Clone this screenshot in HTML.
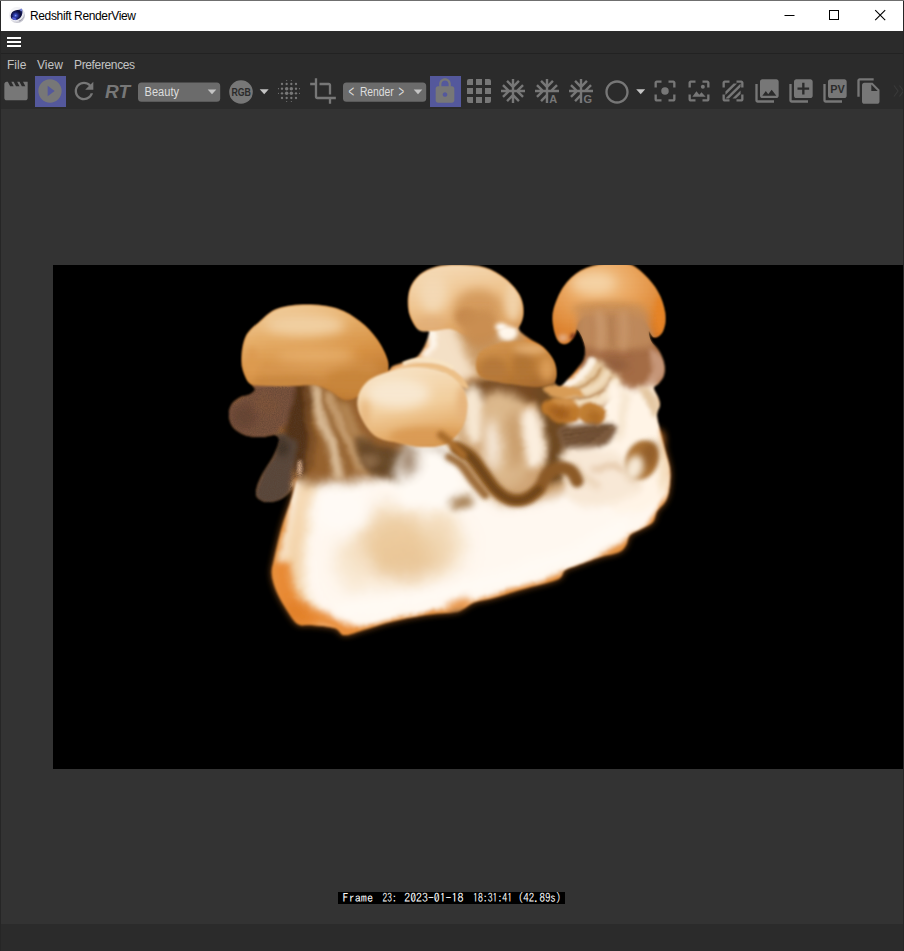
<!DOCTYPE html>
<html><head><meta charset="utf-8"><title>Redshift RenderView</title>
<style>
html,body{margin:0;padding:0;background:#333;}
body{width:904px;height:951px;position:relative;overflow:hidden;font-family:"Liberation Sans",sans-serif;}
#win{position:absolute;left:0;top:0;width:904px;height:951px;background:#2b2b2b;overflow:hidden;}
#titlebar{position:absolute;left:1px;top:1px;width:902px;height:30px;background:#fff;}
#title{position:absolute;left:30px;top:9px;font-size:12px;line-height:14px;color:#000;white-space:nowrap;letter-spacing:-0.36px;}
#topborder{position:absolute;left:0;top:0;width:904px;height:1px;background:#6f6f6f;}
#lborder{position:absolute;left:0;top:1px;width:1px;height:950px;background:#262626;}
#rborder{position:absolute;left:903px;top:1px;width:1px;height:950px;background:#262626;}
#sep1{position:absolute;left:1px;top:53px;width:902px;height:1px;background:#222;}
.menu{position:absolute;top:58px;font-size:12px;line-height:14px;color:#c4c4c4;white-space:nowrap;}
#view{position:absolute;left:1px;top:109px;width:902px;height:815px;background:#333;overflow:hidden;}
#img{position:absolute;left:52px;top:156px;width:850px;height:504px;background:#000;overflow:hidden;}
#status{position:absolute;left:337px;top:783px;width:227px;height:12px;background:#000;color:#fff;font-family:"IPAGothic","Liberation Mono",monospace;font-size:12px;line-height:12px;white-space:pre;box-sizing:border-box;}
.dd{position:absolute;top:82px;height:20px;background:#6a6a6a;border-radius:4px;color:#e4e4e4;font-size:12px;line-height:19px;white-space:nowrap;}
.hl{position:absolute;top:76px;width:31px;height:31px;background:#54589c;}
svg{position:absolute;left:0;top:0;}
</style></head>
<body>
<div id="win">
<div id="titlebar"></div>
<div id="topborder"></div>
<div id="title">Redshift RenderView</div>
<div id="sep1"></div>
<div class="menu" style="left:7px">File</div>
<div class="menu" style="left:37px">View</div>
<div class="menu" style="left:74px;letter-spacing:-0.36px">Preferences</div>
<div class="hl" style="left:35px"></div>
<div class="hl" style="left:430px"></div>
<div id="view">
<div id="img">
<svg width="850" height="504" viewBox="0 0 850 504" style="position:absolute;left:0;top:0">
<defs>
<filter id="b05" filterUnits="userSpaceOnUse" x="150" y="-30" width="500" height="430"><feGaussianBlur stdDeviation="0.7"/></filter>
<filter id="b1" filterUnits="userSpaceOnUse" x="150" y="-30" width="500" height="430"><feGaussianBlur stdDeviation="1.2"/></filter>
<filter id="b2" filterUnits="userSpaceOnUse" x="150" y="-30" width="500" height="430"><feGaussianBlur stdDeviation="2.2"/></filter>
<filter id="b3" filterUnits="userSpaceOnUse" x="150" y="-30" width="500" height="430"><feGaussianBlur stdDeviation="3.5"/></filter>
<filter id="b5" filterUnits="userSpaceOnUse" x="150" y="-30" width="500" height="430"><feGaussianBlur stdDeviation="5.5"/></filter>
<filter id="b9" filterUnits="userSpaceOnUse" x="150" y="-30" width="500" height="430"><feGaussianBlur stdDeviation="9"/></filter>
<filter id="b14" filterUnits="userSpaceOnUse" x="150" y="-30" width="500" height="430"><feGaussianBlur stdDeviation="14"/></filter>
<linearGradient id="cap1" x1="0.25" y1="0" x2="0.6" y2="1"><stop offset="0" stop-color="#f5d4a4"/><stop offset="0.28" stop-color="#e9b068"/><stop offset="0.6" stop-color="#d88f3c"/><stop offset="1" stop-color="#b06822"/></linearGradient>
<linearGradient id="cap2" x1="0.3" y1="0" x2="0.6" y2="1"><stop offset="0" stop-color="#f9e0bc"/><stop offset="0.45" stop-color="#f2c68e"/><stop offset="0.8" stop-color="#e0a460"/><stop offset="1" stop-color="#c8884a"/></linearGradient>
<radialGradient id="cap3" cx="0.42" cy="0.25" r="0.75"><stop offset="0" stop-color="#f6c88e"/><stop offset="0.4" stop-color="#eca458"/><stop offset="0.75" stop-color="#e0842c"/><stop offset="1" stop-color="#d86c12"/></radialGradient>
<linearGradient id="cap4" x1="0.3" y1="0" x2="0.55" y2="1"><stop offset="0" stop-color="#fbe8ca"/><stop offset="0.5" stop-color="#f5d09c"/><stop offset="0.82" stop-color="#e4a860"/><stop offset="1" stop-color="#c8843c"/></linearGradient>
<linearGradient id="cap5" x1="0.2" y1="0" x2="0.6" y2="1"><stop offset="0" stop-color="#dc9e58"/><stop offset="0.5" stop-color="#c27e32"/><stop offset="1" stop-color="#9a5c20"/></linearGradient>
<clipPath id="sil"><path d="M193,112 C191.3,108.0 189.0,102.7 189,96 C189.0,89.3 189.8,78.7 193,72 C196.2,65.3 202.7,60.7 208,56 C213.3,51.3 217.3,46.7 225,44 C232.7,41.3 244.2,40.0 254,40 C263.8,40.0 275.2,41.2 284,44 C292.8,46.8 300.3,51.8 307,57 C313.7,62.2 319.5,68.7 324,75 C328.5,81.3 332.2,89.8 334,95 C335.8,100.2 334.0,105.0 335,106 C336.0,107.0 337.2,102.5 340,101 C342.8,99.5 348.0,98.5 352,97 C356.0,95.5 360.7,94.8 364,92 C367.3,89.2 370.0,84.3 372,80 C374.0,75.7 376.7,68.7 376,66 C375.3,63.3 370.3,65.0 368,64 C365.7,63.0 364.0,63.2 362,60 C360.0,56.8 356.8,50.8 356,45 C355.2,39.2 355.2,30.8 357,25 C358.8,19.2 362.5,13.8 367,10 C371.5,6.2 377.3,3.7 384,2 C390.7,0.3 399.0,-0.2 407,0 C415.0,0.2 424.5,0.7 432,3 C439.5,5.3 446.3,9.5 452,14 C457.7,18.5 463.0,24.8 466,30 C469.0,35.2 469.7,40.5 470,45 C470.3,49.5 468.7,53.7 468,57 C467.3,60.3 464.5,62.2 466,65 C467.5,67.8 473.0,71.2 477,74 C481.0,76.8 486.2,78.5 490,82 C493.8,85.5 497.8,90.7 500,95 C502.2,99.3 502.7,104.2 503,108 C503.3,111.8 501.2,115.8 502,118 C502.8,120.2 505.7,121.8 508,121 C510.3,120.2 513.3,115.8 516,113 C518.7,110.2 521.5,107.2 524,104 C526.5,100.8 529.7,97.7 531,94 C532.3,90.3 532.5,86.0 532,82 C531.5,78.0 529.5,73.0 528,70 C526.5,67.0 524.3,63.7 523,64 C521.7,64.3 521.5,69.7 520,72 C518.5,74.3 516.3,77.3 514,78 C511.7,78.7 508.2,78.7 506,76 C503.8,73.3 501.8,67.2 501,62 C500.2,56.8 499.3,51.7 501,45 C502.7,38.3 506.5,28.5 511,22 C515.5,15.5 521.2,9.8 528,6 C534.8,2.2 543.8,0.0 552,-1 C560.2,-2.0 569.8,-2.5 577,0 C584.2,2.5 590.0,8.7 595,14 C600.0,19.3 604.2,25.7 607,32 C609.8,38.3 611.7,46.2 612,52 C612.3,57.8 610.8,63.7 609,67 C607.2,70.3 603.2,72.2 601,72 C598.8,71.8 596.5,65.3 596,66 C595.5,66.7 596.3,72.7 598,76 C599.7,79.3 603.8,82.3 606,86 C608.2,89.7 610.2,94.0 611,98 C611.8,102.0 611.8,106.7 611,110 C610.2,113.3 607.7,115.8 606,118 C604.3,120.2 601.2,120.7 601,123 C600.8,125.3 604.0,129.2 605,132 C606.0,134.8 607.2,137.0 607,140 C606.8,143.0 604.0,145.8 604,150 C604.0,154.2 605.7,159.2 607,165 C608.3,170.8 610.3,178.3 612,185 C613.7,191.7 616.3,198.3 617,205 C617.7,211.7 616.8,219.7 616,225 C615.2,230.3 614.0,233.5 612,237 C610.0,240.5 606.0,242.7 604,246 C602.0,249.3 602.3,254.2 600,257 C597.7,259.8 593.8,260.8 590,263 C586.2,265.2 579.8,267.2 577,270 C574.2,272.8 574.8,277.2 573,280 C571.2,282.8 570.3,285.0 566,287 C561.7,289.0 553.8,289.8 547,292 C540.2,294.2 530.8,297.8 525,300 C519.2,302.2 514.8,303.0 512,305 C509.2,307.0 510.0,310.2 508,312 C506.0,313.8 506.3,314.0 500,316 C493.7,318.0 480.0,321.2 470,324 C460.0,326.8 448.0,330.8 440,333 C432.0,335.2 427.0,335.2 422,337 C417.0,338.8 413.3,342.3 410,344 C406.7,345.7 408.3,346.0 402,347 C395.7,348.0 382.8,348.3 372,350 C361.2,351.7 347.8,354.3 337,357 C326.2,359.7 314.7,363.8 307,366 C299.3,368.2 295.2,370.5 291,370 C286.8,369.5 287.3,364.7 282,363 C276.7,361.3 265.2,360.7 259,360 C252.8,359.3 249.2,361.5 245,359 C240.8,356.5 237.5,350.3 234,345 C230.5,339.7 226.5,332.8 224,327 C221.5,321.2 219.5,315.3 219,310 C218.5,304.7 219.3,303.0 221,295 C222.7,287.0 226.0,272.5 229,262 C232.0,251.5 236.7,240.3 239,232 C241.3,223.7 243.2,213.2 243,212 C242.8,210.8 240.5,221.3 238,225 C235.5,228.7 232.0,232.0 228,234 C224.0,236.0 218.0,237.3 214,237 C210.0,236.7 205.7,234.5 204,232 C202.3,229.5 203.0,226.0 204,222 C205.0,218.0 207.3,213.0 210,208 C212.7,203.0 217.3,197.3 220,192 C222.7,186.7 225.7,179.7 226,176 C226.3,172.3 225.0,170.7 222,170 C219.0,169.3 213.0,172.0 208,172 C203.0,172.0 196.7,171.7 192,170 C187.3,168.3 182.7,165.3 180,162 C177.3,158.7 176.2,153.8 176,150 C175.8,146.2 177.0,142.0 179,139 C181.0,136.0 185.2,133.5 188,132 C190.8,130.5 193.7,131.2 196,130 C198.3,128.8 201.5,126.7 202,125 C202.5,123.3 200.5,122.2 199,120 C197.5,117.8 194.7,116.0 193,112 Z"/></clipPath>
<clipPath id="c1"><path d="M193,112 C191.3,108.2 189.0,102.7 189,96 C189.0,89.3 189.8,78.7 193,72 C196.2,65.3 202.7,60.7 208,56 C213.3,51.3 217.3,46.7 225,44 C232.7,41.3 244.2,40.0 254,40 C263.8,40.0 275.2,41.2 284,44 C292.8,46.8 300.3,51.8 307,57 C313.7,62.2 319.5,68.7 324,75 C328.5,81.3 332.5,89.2 334,95 C335.5,100.8 335.0,105.2 333,110 C331.0,114.8 326.3,120.5 322,124 C317.7,127.5 312.0,129.2 307,131 C302.0,132.8 297.0,135.8 292,135 C287.0,134.2 282.0,128.5 277,126 C272.0,123.5 267.8,120.8 262,120 C256.2,119.2 249.5,120.8 242,121 C234.5,121.2 224.2,121.3 217,121 C209.8,120.7 203.0,120.5 199,119 C195.0,117.5 194.7,115.8 193,112 Z"/></clipPath>
<clipPath id="c2"><path d="M362,60 C360.0,56.5 356.8,50.8 356,45 C355.2,39.2 355.2,30.8 357,25 C358.8,19.2 362.5,13.8 367,10 C371.5,6.2 377.3,3.7 384,2 C390.7,0.3 399.0,-0.2 407,0 C415.0,0.2 424.5,0.7 432,3 C439.5,5.3 446.3,9.5 452,14 C457.7,18.5 463.0,24.8 466,30 C469.0,35.2 469.7,40.5 470,45 C470.3,49.5 469.7,53.8 468,57 C466.3,60.2 463.8,62.5 460,64 C456.2,65.5 450.0,64.7 445,66 C440.0,67.3 435.5,71.3 430,72 C424.5,72.7 417.3,71.3 412,70 C406.7,68.7 403.3,64.7 398,64 C392.7,63.3 385.0,65.7 380,66 C375.0,66.3 371.0,67.0 368,66 C365.0,65.0 364.0,63.5 362,60 Z"/></clipPath>
<clipPath id="c3"><path d="M501,62 C500.2,56.8 499.3,51.7 501,45 C502.7,38.3 506.5,28.5 511,22 C515.5,15.5 521.2,9.8 528,6 C534.8,2.2 543.8,0.0 552,-1 C560.2,-2.0 569.8,-2.5 577,0 C584.2,2.5 590.0,8.7 595,14 C600.0,19.3 604.2,25.7 607,32 C609.8,38.3 611.7,46.2 612,52 C612.3,57.8 610.8,63.7 609,67 C607.2,70.3 603.3,72.8 601,72 C598.7,71.2 597.3,65.2 595,62 C592.7,58.8 592.8,55.2 587,53 C581.2,50.8 568.8,49.3 560,49 C551.2,48.7 539.8,49.3 534,51 C528.2,52.7 527.0,55.8 525,59 C523.0,62.2 523.8,66.8 522,70 C520.2,73.2 516.7,77.0 514,78 C511.3,79.0 508.2,78.7 506,76 C503.8,73.3 501.8,67.2 501,62 Z"/></clipPath>
<clipPath id="c4"><path d="M307,150 C304.2,143.5 303.7,137.7 305,132 C306.3,126.3 310.0,120.2 315,116 C320.0,111.8 327.5,109.3 335,107 C342.5,104.7 351.2,102.2 360,102 C368.8,101.8 380.3,103.3 388,106 C395.7,108.7 401.7,113.2 406,118 C410.3,122.8 413.0,128.8 414,135 C415.0,141.2 413.7,149.2 412,155 C410.3,160.8 407.7,165.8 404,170 C400.3,174.2 396.0,178.0 390,180 C384.0,182.0 375.5,182.3 368,182 C360.5,181.7 352.7,179.8 345,178 C337.3,176.2 328.3,175.7 322,171 C315.7,166.3 309.8,156.5 307,150 Z"/></clipPath>
<clipPath id="c5"><path d="M423,100 C423.0,95.7 424.3,89.7 428,86 C431.7,82.3 438.8,79.7 445,78 C451.2,76.3 458.3,75.7 465,76 C471.7,76.3 479.5,77.3 485,80 C490.5,82.7 495.0,87.7 498,92 C501.0,96.3 502.7,101.7 503,106 C503.3,110.3 503.0,115.3 500,118 C497.0,120.7 490.8,121.7 485,122 C479.2,122.3 471.7,120.8 465,120 C458.3,119.2 451.2,118.3 445,117 C438.8,115.7 431.7,114.8 428,112 C424.3,109.2 423.0,104.3 423,100 Z"/></clipPath>
<filter id="wob" x="-5%" y="-5%" width="110%" height="110%"><feTurbulence type="fractalNoise" baseFrequency="0.035" numOctaves="3" seed="7" result="t"/><feDisplacementMap in="SourceGraphic" in2="t" scale="7" xChannelSelector="R" yChannelSelector="G"/></filter>
<filter id="grain" x="0" y="0" width="100%" height="100%"><feTurbulence type="fractalNoise" baseFrequency="0.85" numOctaves="2" seed="3"/><feColorMatrix type="matrix" values="0 0 0 0 0.1  0 0 0 0 0.05  0 0 0 0 0.03  1.8 0 0 0 -0.6"/></filter>
<pattern id="lines" width="4" height="2.6" patternUnits="userSpaceOnUse"><rect width="4" height="1" fill="#fff" opacity="0.10"/><rect y="1.3" width="4" height="0.8" fill="#7a4a1a" opacity="0.10"/></pattern>
</defs>
<rect width="850" height="504" fill="#000"/>
<path d="M243,212 C232.8,214.8 241.3,223.7 239,232 C236.7,240.3 232.0,251.5 229,262 C226.0,272.5 222.7,287.0 221,295 C219.3,303.0 218.5,304.7 219,310 C219.5,315.3 221.5,321.2 224,327 C226.5,332.8 230.5,339.7 234,345 C237.5,350.3 240.8,356.5 245,359 C249.2,361.5 252.8,359.3 259,360 C265.2,360.7 276.7,361.3 282,363 C287.3,364.7 286.8,369.5 291,370 C295.2,370.5 299.3,368.2 307,366 C314.7,363.8 326.2,359.7 337,357 C347.8,354.3 361.2,351.7 372,350 C382.8,348.3 395.7,348.0 402,347 C408.3,346.0 406.7,345.7 410,344 C413.3,342.3 417.0,338.8 422,337 C427.0,335.2 432.0,335.2 440,333 C448.0,330.8 460.0,326.8 470,324 C480.0,321.2 493.7,318.0 500,316 C506.3,314.0 506.0,313.8 508,312 C510.0,310.2 509.2,307.0 512,305 C514.8,303.0 519.2,302.2 525,300 C530.8,297.8 540.2,294.2 547,292 C553.8,289.8 561.7,289.0 566,287 C570.3,285.0 571.2,282.8 573,280 C574.8,277.2 574.2,272.8 577,270 C579.8,267.2 586.2,265.2 590,263 C593.8,260.8 597.7,259.8 600,257 C602.3,254.2 602.0,249.3 604,246 C606.0,242.7 610.0,240.5 612,237 C614.0,233.5 615.2,230.3 616,225 C616.8,219.7 617.7,211.7 617,205 C616.3,198.3 613.7,191.7 612,185 C610.3,178.3 615.7,169.2 607,165 C598.3,160.8 594.5,154.2 560,160 C525.5,165.8 443.3,190.8 400,200 C356.7,209.2 326.2,213.0 300,215 C273.8,217.0 253.2,209.2 243,212 Z" fill="#d87c2a" filter="url(#b3)" opacity="0.8"/>
<g filter="url(#b1)"><g clip-path="url(#sil)">
<rect x="170" y="-5" width="460" height="385" fill="#e08a36"/>
<g filter="url(#wob)">
<path d="M249,208 C233.0,222.0 237.8,246.7 234,262 C230.2,277.3 227.0,290.0 226,300 C225.0,310.0 225.8,315.0 228,322 C230.2,329.0 235.0,336.7 239,342 C243.0,347.3 243.5,350.2 252,354 C260.5,357.8 276.0,365.2 290,365 C304.0,364.8 317.7,356.7 336,353 C354.3,349.3 382.7,347.0 400,343 C417.3,339.0 423.3,334.2 440,329 C456.7,323.8 482.2,318.8 500,312 C517.8,305.2 535.7,293.8 547,288 C558.3,282.2 560.3,281.8 568,277 C575.7,272.2 586.7,265.0 593,259 C599.3,253.0 602.8,246.8 606,241 C609.2,235.2 611.2,230.8 612,224 C612.8,217.2 612.2,209.0 611,200 C609.8,191.0 606.8,181.7 605,170 C603.2,158.3 607.5,138.7 600,130 C592.5,121.3 574.7,118.3 560,118 C545.3,117.7 532.0,121.8 512,128 C492.0,134.2 470.3,146.7 440,155 C409.7,163.3 361.8,169.2 330,178 C298.2,186.8 265.0,194.0 249,208 Z" fill="#fff8f0" filter="url(#b2)"/>
<path d="M248,215 C243.7,220.0 241.3,237.5 238,250 C234.7,262.5 230.0,279.2 228,290 C226.0,300.8 224.7,307.0 226,315 C227.3,323.0 232.0,331.8 236,338 C240.0,344.2 245.0,349.3 250,352 C255.0,354.7 265.0,356.8 266,354 C267.0,351.2 258.7,342.3 256,335 C253.3,327.7 250.7,319.2 250,310 C249.3,300.8 250.7,290.0 252,280 C253.3,270.0 256.0,260.0 258,250 C260.0,240.0 265.7,225.8 264,220 C262.3,214.2 252.3,210.0 248,215 Z" fill="#f3d3a8" filter="url(#b5)" opacity="0.95"/>
<path d="M219,300 C217.0,305.0 219.5,320.0 222,328 C224.5,336.0 230.0,342.7 234,348 C238.0,353.3 240.0,357.7 246,360 C252.0,362.3 262.3,360.2 270,362 C277.7,363.8 286.0,370.5 292,371 C298.0,371.5 307.3,367.8 306,365 C304.7,362.2 291.0,357.2 284,354 C277.0,350.8 269.7,349.3 264,346 C258.3,342.7 254.0,338.7 250,334 C246.0,329.3 242.7,324.0 240,318 C237.3,312.0 237.5,301.0 234,298 C230.5,295.0 221.0,295.0 219,300 Z" fill="#e88a34" filter="url(#b3)"/>
<ellipse cx="244" cy="346" rx="14" ry="9" fill="#e07e28" filter="url(#b5)" transform="rotate(35 244 346)" opacity="0.8"/>
<ellipse cx="352" cy="292" rx="36" ry="18" fill="#dcae74" filter="url(#b9)" opacity="0.7"/>
<ellipse cx="348" cy="285" rx="56" ry="32" fill="#ebc898" filter="url(#b14)" opacity="0.65"/>
<ellipse cx="335" cy="270" rx="34" ry="26" fill="#ebc898" filter="url(#b9)" opacity="0.75"/>
<ellipse cx="388" cy="272" rx="18" ry="30" fill="#efd2a8" filter="url(#b9)" opacity="0.6"/>
<ellipse cx="300" cy="300" rx="14" ry="30" fill="#f6e2c6" filter="url(#b9)" opacity="0.7"/>
<path d="M290,345 C298.3,343.8 321.7,341.2 340,338 C358.3,334.8 380.0,330.7 400,326 C420.0,321.3 440.0,316.0 460,310 C480.0,304.0 501.7,298.0 520,290 C538.3,282.0 561.7,266.7 570,262" fill="none" stroke="#fffaf4" stroke-width="16" stroke-linecap="round" stroke-linejoin="round" filter="url(#b5)"/>
<ellipse cx="290" cy="245" rx="30" ry="28" fill="#fffaf5" filter="url(#b9)"/>
<ellipse cx="385" cy="212" rx="14" ry="26" fill="#fffdf9" filter="url(#b5)"/>
<ellipse cx="406" cy="340" rx="13" ry="6" fill="#e8954a" filter="url(#b3)" transform="rotate(-18 406 340)"/>
<ellipse cx="404" cy="349" rx="9" ry="4" fill="#6a5a4c" filter="url(#b2)" transform="rotate(-15 404 349)" opacity="0.7"/>
<ellipse cx="408" cy="236" rx="14" ry="7" fill="#a07848" filter="url(#b3)" opacity="0.9"/>
<path d="M226,116 C242.3,104.0 315.7,109.0 336,118 C356.3,127.0 345.3,155.3 348,170 C350.7,184.7 360.0,198.7 352,206 C344.0,213.3 317.0,212.2 300,214 C283.0,215.8 260.3,221.0 250,217 C239.7,213.0 242.0,206.8 238,190 C234.0,173.2 209.7,128.0 226,116 Z" fill="#96622e" filter="url(#b5)"/>
<path d="M224,118 C228.0,111.3 248.3,113.0 254,120 C259.7,127.0 258.3,145.3 258,160 C257.7,174.7 255.3,200.5 252,208 C248.7,215.5 241.7,213.0 238,205 C234.3,197.0 232.3,174.5 230,160 C227.7,145.5 220.0,124.7 224,118 Z" fill="#523216" filter="url(#b3)"/>
<path d="M300,135 C303.3,122.5 329.3,113.3 338,120 C346.7,126.7 350.8,160.8 352,175 C353.2,189.2 350.7,201.7 345,205 C339.3,208.3 325.5,206.7 318,195 C310.5,183.3 296.7,147.5 300,135 Z" fill="#96602e" filter="url(#b5)"/>
<path d="M262,122 C263.0,126.7 265.3,140.7 268,150 C270.7,159.3 275.0,168.0 278,178 C281.0,188.0 284.7,204.7 286,210" fill="none" stroke="#ecd4b4" stroke-width="8" stroke-linecap="round" stroke-linejoin="round" filter="url(#b3)"/>
<path d="M276,128 C277.3,132.0 280.3,143.7 284,152 C287.7,160.3 294.0,169.3 298,178 C302.0,186.7 306.3,199.7 308,204" fill="none" stroke="#d8b488" stroke-width="7" stroke-linecap="round" stroke-linejoin="round" filter="url(#b3)"/>
<path d="M290,140 C291.7,143.3 296.0,152.7 300,160 C304.0,167.3 310.3,176.7 314,184 C317.7,191.3 320.7,200.7 322,204" fill="none" stroke="#c8a070" stroke-width="5" stroke-linecap="round" stroke-linejoin="round" filter="url(#b3)"/>
<path d="M252,125 C252.5,129.2 253.7,141.7 255,150 C256.3,158.3 259.5,166.7 260,175 C260.5,183.3 258.3,195.8 258,200" fill="none" stroke="#7a4e28" stroke-width="4" stroke-linecap="round" stroke-linejoin="round" filter="url(#b2)"/>
<path d="M270,126 C271.0,130.0 273.0,141.3 276,150 C279.0,158.7 284.7,168.7 288,178 C291.3,187.3 294.7,201.3 296,206" fill="none" stroke="#9a6c3c" stroke-width="2.5" stroke-linecap="round" stroke-linejoin="round" filter="url(#b1)" opacity="0.8"/>
<path d="M304,172 C306.3,167.7 320.7,179.7 330,182 C339.3,184.3 350.3,185.7 360,186 C369.7,186.3 382.7,181.7 388,184 C393.3,186.3 394.0,195.0 392,200 C390.0,205.0 383.8,211.3 376,214 C368.2,216.7 355.0,217.0 345,216 C335.0,215.0 322.8,215.3 316,208 C309.2,200.7 301.7,176.3 304,172 Z" fill="#664628" filter="url(#b3)"/>
<ellipse cx="318" cy="196" rx="10" ry="8" fill="#8a6844" filter="url(#b3)"/>
<path d="M170,152 C168.7,146.0 172.3,140.0 176,136 C179.7,132.0 187.3,131.0 192,128 C196.7,125.0 196.0,119.7 204,118 C212.0,116.3 234.3,113.5 240,118 C245.7,122.5 240.3,137.0 238,145 C235.7,153.0 231.3,160.8 226,166 C220.7,171.2 213.0,175.0 206,176 C199.0,177.0 190.0,176.0 184,172 C178.0,168.0 171.3,158.0 170,152 Z" fill="#7a523c" filter="url(#b2)"/>
<ellipse cx="191" cy="151" rx="12" ry="13" fill="#6a4636" filter="url(#b3)"/>
<ellipse cx="214" cy="140" rx="12" ry="10" fill="#80543a" filter="url(#b3)"/>
<path d="M222,168 C226.0,165.7 241.0,170.7 244,176 C247.0,181.3 241.0,191.7 240,200 C239.0,208.3 240.3,219.7 238,226 C235.7,232.3 231.0,235.7 226,238 C221.0,240.3 212.3,241.7 208,240 C203.7,238.3 200.0,233.3 200,228 C200.0,222.7 204.7,214.3 208,208 C211.3,201.7 217.7,196.7 220,190 C222.3,183.3 218.0,170.3 222,168 Z" fill="#5a493c" filter="url(#b2)"/>
<ellipse cx="230" cy="182" rx="7" ry="10" fill="#3e3128" filter="url(#b3)"/>
<ellipse cx="246" cy="204" rx="2.2" ry="8" fill="#f0c4a0" filter="url(#b1)" transform="rotate(8 246 204)"/>
<path d="M370,62 C362.7,65.3 377.3,74.3 376,80 C374.7,85.7 368.0,92.0 362,96 C356.0,100.0 342.8,101.3 340,104 C337.2,106.7 331.7,110.0 345,112 C358.3,114.0 403.2,122.7 420,116 C436.8,109.3 446.0,81.3 446,72 C446.0,62.7 432.7,61.7 420,60 C407.3,58.3 377.3,58.7 370,62 Z" fill="#f4e0c6" filter="url(#b3)"/>
<path d="M378,66 C378.3,68.0 381.0,74.0 380,78 C379.0,82.0 373.3,88.0 372,90" fill="none" stroke="#fffaf2" stroke-width="6" stroke-linecap="round" stroke-linejoin="round" filter="url(#b2)"/>
<path d="M404,60 C397.7,64.3 409.0,74.7 412,82 C415.0,89.3 419.0,97.0 422,104 C425.0,111.0 424.0,120.0 430,124 C436.0,128.0 451.0,136.7 458,128 C465.0,119.3 473.3,84.0 472,72 C470.7,60.0 461.3,58.0 450,56 C438.7,54.0 410.3,55.7 404,60 Z" fill="#c89660" filter="url(#b5)"/>
<ellipse cx="452" cy="67" rx="9" ry="7" fill="#fff8ee" filter="url(#b3)"/>
<path d="M410,116 C426.8,105.7 487.0,110.7 504,118 C521.0,125.3 508.7,143.8 512,160 C515.3,176.2 531.0,202.0 524,215 C517.0,228.0 486.0,236.2 470,238 C454.0,239.8 439.2,235.7 428,226 C416.8,216.3 406.0,198.3 403,180 C400.0,161.7 393.2,126.3 410,116 Z" fill="#cfa474" filter="url(#b5)"/>
<path d="M420,116 C433.0,112.7 488.3,112.7 502,116 C515.7,119.3 515.0,132.7 502,136 C489.0,139.3 437.7,139.3 424,136 C410.3,132.7 407.0,119.3 420,116 Z" fill="#754a24" filter="url(#b3)"/>
<path d="M484,122 C487.0,114.5 503.0,117.0 508,125 C513.0,133.0 513.7,155.5 514,170 C514.3,184.5 513.3,204.7 510,212 C506.7,219.3 497.3,221.0 494,214 C490.7,207.0 491.7,185.3 490,170 C488.3,154.7 481.0,129.5 484,122 Z" fill="#6e4820" filter="url(#b3)"/>
<path d="M428,135 C433.7,124.2 462.0,124.2 470,135 C478.0,145.8 479.0,185.5 476,200 C473.0,214.5 458.7,222.0 452,222 C445.3,222.0 440.0,214.5 436,200 C432.0,185.5 422.3,145.8 428,135 Z" fill="#dcb88c" filter="url(#b5)"/>
<ellipse cx="440" cy="180" rx="8" ry="26" fill="#f6e8d8" filter="url(#b5)"/>
<ellipse cx="462" cy="175" rx="8" ry="30" fill="#c49664" filter="url(#b5)" opacity="0.8"/>
<path d="M470,150 C472.0,142.0 482.7,142.5 486,150 C489.3,157.5 492.0,187.0 490,195 C488.0,203.0 477.3,205.5 474,198 C470.7,190.5 468.0,158.0 470,150 Z" fill="#fbeede" filter="url(#b3)"/>
<path d="M410,128 C411.7,119.7 420.7,118.3 424,122 C427.3,125.7 429.7,140.7 430,150 C430.3,159.3 428.7,174.3 426,178 C423.3,181.7 416.7,180.3 414,172 C411.3,163.7 408.3,136.3 410,128 Z" fill="#f6e6d0" filter="url(#b3)"/>
<path d="M348,186 C355.5,177.3 386.3,177.8 395,186 C403.7,194.2 407.5,226.3 400,235 C392.5,243.7 358.7,246.2 350,238 C341.3,229.8 340.5,194.7 348,186 Z" fill="#fffaf4" filter="url(#b5)"/>
<ellipse cx="356" cy="196" rx="9" ry="14" fill="#8a6c50" filter="url(#b5)" opacity="0.8"/>
<path d="M524,52 C535.3,47.0 585.0,51.0 598,56 C611.0,61.0 601.7,72.7 602,82 C602.3,91.3 610.3,106.7 600,112 C589.7,117.3 551.7,118.3 540,114 C528.3,109.7 532.7,96.3 530,86 C527.3,75.7 512.7,57.0 524,52 Z" fill="#b07a50" filter="url(#b3)"/>
<path d="M553,52 C553.3,56.0 554.8,68.3 555,76 C555.2,83.7 554.2,94.3 554,98" fill="none" stroke="#c09468" stroke-width="7" stroke-linecap="round" stroke-linejoin="round" filter="url(#b3)"/>
<path d="M577,54 C577.2,57.7 578.0,69.3 578,76 C578.0,82.7 577.2,91.0 577,94" fill="none" stroke="#be9064" stroke-width="6" stroke-linecap="round" stroke-linejoin="round" filter="url(#b3)"/>
<path d="M540,56 C540.3,59.3 541.7,72.7 542,76" fill="none" stroke="#9a6238" stroke-width="5" stroke-linecap="round" stroke-linejoin="round" filter="url(#b2)"/>
<path d="M531,76 C527.2,78.7 526.7,91.7 527,98 C527.3,104.3 528.8,110.2 533,114 C537.2,117.8 544.2,119.2 552,121 C559.8,122.8 571.3,125.2 580,125 C588.7,124.8 598.5,123.2 604,120 C609.5,116.8 612.0,110.7 613,106 C614.0,101.3 612.5,97.0 610,92 C607.5,87.0 604.7,77.7 598,76 C591.3,74.3 578.0,81.0 570,82 C562.0,83.0 556.5,83.0 550,82 C543.5,81.0 534.8,73.3 531,76 Z" fill="#a46c44" filter="url(#b2)"/>
<path d="M536,116 C539.3,117.0 548.3,120.3 556,122 C563.7,123.7 574.3,126.2 582,126 C589.7,125.8 598.7,121.8 602,121" fill="none" stroke="#c69a7c" stroke-width="3" stroke-linecap="round" stroke-linejoin="round" filter="url(#b2)"/>
<path d="M596,84 C597.7,81.7 605.3,88.7 608,92 C610.7,95.3 612.3,100.0 612,104 C611.7,108.0 609.3,113.3 606,116 C602.7,118.7 593.3,121.7 592,120 C590.7,118.3 597.3,112.0 598,106 C598.7,100.0 594.3,86.3 596,84 Z" fill="#c69678" filter="url(#b2)"/>
<ellipse cx="560" cy="100" rx="14" ry="8" fill="#94603c" filter="url(#b3)"/>
<path d="M504,122 C504.3,117.7 515.0,119.0 520,116 C525.0,113.0 530.7,108.0 534,104 C537.3,100.0 537.0,92.7 540,92 C543.0,91.3 547.7,96.7 552,100 C556.3,103.3 563.3,108.3 566,112 C568.7,115.7 569.7,118.3 568,122 C566.3,125.7 561.0,130.7 556,134 C551.0,137.3 544.3,140.7 538,142 C531.7,143.3 523.7,145.3 518,142 C512.3,138.7 503.7,126.3 504,122 Z" fill="#e8cca4" filter="url(#b2)"/>
<path d="M507,121 C509.5,120.2 517.7,118.3 522,116 C526.3,113.7 530.2,110.5 533,107 C535.8,103.5 538.0,97.0 539,95" fill="none" stroke="#fcf2e4" stroke-width="7" stroke-linecap="round" stroke-linejoin="round" filter="url(#b1)"/>
<path d="M510,127 C512.8,126.3 521.8,125.2 527,123 C532.2,120.8 537.5,117.5 541,114 C544.5,110.5 546.8,104.0 548,102" fill="none" stroke="#b88650" stroke-width="2.2" stroke-linecap="round" stroke-linejoin="round" filter="url(#b1)"/>
<path d="M512,131 C515.0,130.5 524.3,130.0 530,128 C535.7,126.0 542.0,122.5 546,119 C550.0,115.5 552.7,109.0 554,107" fill="none" stroke="#f1dcbc" stroke-width="5" stroke-linecap="round" stroke-linejoin="round" filter="url(#b1)"/>
<path d="M516,136 C519.2,135.5 529.2,135.0 535,133 C540.8,131.0 547.0,127.5 551,124 C555.0,120.5 557.7,114.0 559,112" fill="none" stroke="#a87444" stroke-width="2" stroke-linecap="round" stroke-linejoin="round" filter="url(#b1)"/>
<path d="M521,140 C524.2,139.5 534.2,139.0 540,137 C545.8,135.0 552.0,131.5 556,128 C560.0,124.5 562.7,118.0 564,116" fill="none" stroke="#f4e2c6" stroke-width="5" stroke-linecap="round" stroke-linejoin="round" filter="url(#b1)"/>
<path d="M530,144 C533.0,143.3 542.7,142.2 548,140 C553.3,137.8 558.7,134.2 562,131 C565.3,127.8 567.0,122.7 568,121" fill="none" stroke="#b48250" stroke-width="1.8" stroke-linecap="round" stroke-linejoin="round" filter="url(#b1)"/>
<path d="M556,118 C560.7,108.7 570.0,123.7 578,124 C586.0,124.3 599.3,115.7 604,120 C608.7,124.3 605.3,141.3 606,150 C606.7,158.7 606.3,162.8 608,172 C609.7,181.2 615.0,194.5 616,205 C617.0,215.5 623.3,228.5 614,235 C604.7,241.5 570.7,253.2 560,244 C549.3,234.8 550.7,201.0 550,180 C549.3,159.0 551.3,127.3 556,118 Z" fill="#fff4e6" filter="url(#b3)"/>
<path d="M586,120 C586.3,117.0 596.3,122.7 600,126 C603.7,129.3 607.0,135.0 608,140 C609.0,145.0 607.7,155.3 606,156 C604.3,156.7 601.3,150.0 598,144 C594.7,138.0 585.7,123.0 586,120 Z" fill="#e6ccaa" filter="url(#b2)"/>
<ellipse cx="611" cy="200" rx="4" ry="30" fill="#f2d8b4" filter="url(#b3)"/>
<path d="M592,124 C593.0,126.0 596.7,131.7 598,136 C599.3,140.3 599.7,147.7 600,150" fill="none" stroke="#e2c49c" stroke-width="4" stroke-linecap="round" stroke-linejoin="round" filter="url(#b2)"/>
<path d="M572,128 C571.7,131.7 571.0,142.7 570,150 C569.0,157.3 566.7,168.3 566,172" fill="none" stroke="#f0dcc0" stroke-width="5" stroke-linecap="round" stroke-linejoin="round" filter="url(#b3)"/>
<ellipse cx="509" cy="145" rx="21" ry="12.5" fill="#c07a2e" filter="url(#b1)" transform="rotate(14 509 145)"/>
<ellipse cx="539" cy="149" rx="12.5" ry="11" fill="#c28034" filter="url(#b1)"/>
<ellipse cx="541" cy="152" rx="7" ry="6" fill="#aa6824" filter="url(#b3)"/>
<ellipse cx="506" cy="147" rx="12" ry="7" fill="#a25e1c" filter="url(#b3)" transform="rotate(14 506 147)"/>
<ellipse cx="512" cy="137" rx="14" ry="3" fill="#dca05c" filter="url(#b2)" transform="rotate(14 512 137)" opacity="0.8"/>
<path d="M490,123 C491.2,121.3 499.7,119.8 505,120 C510.3,120.2 517.5,122.0 522,124 C526.5,126.0 533.2,130.5 532,132 C530.8,133.5 520.7,133.3 515,133 C509.3,132.7 502.2,131.7 498,130 C493.8,128.3 488.8,124.7 490,123 Z" fill="#d89c56" filter="url(#b1)"/>
<path d="M504,164 C506.3,160.7 515.0,161.0 522,160 C529.0,159.0 539.3,157.7 546,158 C552.7,158.3 560.3,159.0 562,162 C563.7,165.0 559.7,172.2 556,176 C552.3,179.8 546.0,183.2 540,185 C534.0,186.8 525.3,187.8 520,187 C514.7,186.2 510.7,183.8 508,180 C505.3,176.2 501.7,167.3 504,164 Z" fill="#7c5a3c" filter="url(#b2)"/>
<path d="M508.0,167.0 L557.0,160.0" stroke="#56391f" stroke-width="1.1" filter="url(#b05)" opacity="0.85"/>
<path d="M509.5,170.6 L553.5,163.4" stroke="#56391f" stroke-width="1.1" filter="url(#b05)" opacity="0.85"/>
<path d="M511.0,174.2 L550.0,166.8" stroke="#56391f" stroke-width="1.1" filter="url(#b05)" opacity="0.85"/>
<path d="M512.5,177.8 L546.5,170.2" stroke="#56391f" stroke-width="1.1" filter="url(#b05)" opacity="0.85"/>
<path d="M514.0,181.4 L543.0,173.6" stroke="#56391f" stroke-width="1.1" filter="url(#b05)" opacity="0.85"/>
<path d="M515.5,185.0 L539.5,177.0" stroke="#56391f" stroke-width="1.1" filter="url(#b05)" opacity="0.85"/>
<path d="M508,190 C509.7,180.8 521.3,183.7 530,183 C538.7,182.3 550.7,182.8 560,186 C569.3,189.2 581.0,196.7 586,202 C591.0,207.3 591.3,213.3 590,218 C588.7,222.7 583.3,226.7 578,230 C572.7,233.3 567.7,236.7 558,238 C548.3,239.3 528.3,246.0 520,238 C511.7,230.0 506.3,199.2 508,190 Z" fill="#f8e8d6" filter="url(#b3)"/>
<path d="M540,206 C542.7,205.2 551.0,201.0 556,201 C561.0,201.0 566.0,203.5 570,206 C574.0,208.5 578.3,214.3 580,216" fill="none" stroke="#d8b48c" stroke-width="4" stroke-linecap="round" stroke-linejoin="round" filter="url(#b3)"/>
<path d="M520,200 C521.7,202.3 525.8,210.3 530,214 C534.2,217.7 542.5,220.7 545,222" fill="none" stroke="#e2c4a0" stroke-width="4" stroke-linecap="round" stroke-linejoin="round" filter="url(#b3)"/>
</g></g></g>
<g filter="url(#b1)"><g clip-path="url(#c5)"><rect x="415" y="65" width="100" height="70" fill="url(#cap5)"/>
<ellipse cx="440" cy="104" rx="14" ry="12" fill="#b47430" filter="url(#b3)"/>
<ellipse cx="470" cy="98" rx="10" ry="16" fill="#b0702c" filter="url(#b3)"/>
<ellipse cx="478" cy="84" rx="18" ry="5" fill="#e8b070" filter="url(#b3)"/>
<ellipse cx="494" cy="104" rx="8" ry="12" fill="#dc9a50" filter="url(#b3)"/>
<rect x="415" y="65" width="100" height="70" fill="url(#lines)"/>
</g></g>
<g filter="url(#b1)"><g clip-path="url(#c2)"><rect x="350" y="-5" width="125" height="85" fill="url(#cap2)"/>
<ellipse cx="425" cy="44" rx="24" ry="20" fill="#d69a58" filter="url(#b5)"/>
<ellipse cx="412" cy="52" rx="10" ry="8" fill="#c48444" filter="url(#b3)"/>
<ellipse cx="380" cy="28" rx="14" ry="20" fill="#f7dcb6" filter="url(#b5)"/>
<ellipse cx="460" cy="36" rx="8" ry="20" fill="#f4d4a8" filter="url(#b3)"/>
<ellipse cx="378" cy="58" rx="14" ry="6" fill="#e4b078" filter="url(#b3)"/>
<rect x="350" y="-5" width="125" height="85" fill="url(#lines)"/>
</g></g>
<g filter="url(#b1)"><g clip-path="url(#c3)"><rect x="495" y="-5" width="122" height="92" fill="url(#cap3)"/>
<ellipse cx="556" cy="44" rx="38" ry="8" fill="#cf9050" filter="url(#b3)"/>
<ellipse cx="607" cy="50" rx="5" ry="20" fill="#e8801c" filter="url(#b2)"/>
<ellipse cx="540" cy="18" rx="22" ry="10" fill="#f8d4a4" filter="url(#b5)"/>
<ellipse cx="510" cy="73" rx="5" ry="3.5" fill="#e8b48c" filter="url(#b2)"/>
<ellipse cx="521" cy="72" rx="3.5" ry="4" fill="#6a1c10" filter="url(#b1)"/>
<rect x="495" y="-5" width="122" height="92" fill="url(#lines)"/>
</g></g>
<g clip-path="url(#sil)">
<path d="M528,47 C533.8,44.0 549.3,44.0 560,44 C570.7,44.0 586.0,44.3 592,47 C598.0,49.7 595.0,54.2 596,60 C597.0,65.8 609.0,78.3 598,82 C587.0,85.7 542.2,85.3 530,82 C517.8,78.7 525.3,67.8 525,62 C524.7,56.2 522.2,50.0 528,47 Z" fill="#bf8a5c" filter="url(#b3)" opacity="0.9"/>
<path d="M546,48 C546.3,51.0 547.8,60.0 548,66 C548.2,72.0 547.2,81.0 547,84" fill="none" stroke="#d4a67c" stroke-width="5" stroke-linecap="round" stroke-linejoin="round" filter="url(#b3)" opacity="0.8"/>
<path d="M570,48 C570.2,51.0 571.0,60.0 571,66 C571.0,72.0 570.2,81.0 570,84" fill="none" stroke="#d0a074" stroke-width="5" stroke-linecap="round" stroke-linejoin="round" filter="url(#b3)" opacity="0.8"/>
<path d="M558,52 C558.2,56.7 558.8,75.3 559,80" fill="none" stroke="#a8744a" stroke-width="3" stroke-linecap="round" stroke-linejoin="round" filter="url(#b2)" opacity="0.7"/>
</g>
<g filter="url(#b1)"><g clip-path="url(#c1)"><rect x="185" y="35" width="155" height="105" fill="url(#cap1)"/>
<ellipse cx="262" cy="106" rx="62" ry="12" fill="#d8944a" filter="url(#b5)"/>
<ellipse cx="300" cy="118" rx="30" ry="16" fill="#c88232" filter="url(#b5)"/>
<ellipse cx="252" cy="60" rx="40" ry="11" fill="#f4d2a2" filter="url(#b5)"/>
<ellipse cx="199" cy="100" rx="6" ry="18" fill="#de9848" filter="url(#b3)"/>
<ellipse cx="235" cy="116" rx="38" ry="5" fill="#c88438" filter="url(#b3)"/>
<ellipse cx="262" cy="90" rx="40" ry="9" fill="#e6aa62" filter="url(#b5)"/>
<rect x="185" y="35" width="155" height="105" fill="url(#lines)"/>
</g></g>
<path d="M408,48 C412.3,44.7 429.7,43.0 436,46 C442.3,49.0 446.0,60.3 446,66 C446.0,71.7 440.3,77.7 436,80 C431.7,82.3 424.3,82.3 420,80 C415.7,77.7 412.0,71.3 410,66 C408.0,60.7 403.7,51.3 408,48 Z" fill="#c88c50" filter="url(#b3)" opacity="0.85"/>
<ellipse cx="455" cy="68" rx="9" ry="7" fill="#fff6ea" filter="url(#b2)"/>
<ellipse cx="448" cy="62" rx="6" ry="4" fill="#fffaf2" filter="url(#b2)"/>
<g filter="url(#b1)">
<path d="M336,112 C345,100 365,95 385,99 C400,102 412,112 416,124 L402,119 C382,108 360,108 336,112 Z" fill="#ecc088"/>
<path d="M350,99 C365,92 386,94 400,103" stroke="#f8e4c4" stroke-width="4" fill="none"/>
<path d="M338,110 C352,104 372,103 390,108" stroke="#c8904c" stroke-width="1.5" fill="none"/>
</g>
<g filter="url(#b1)"><g clip-path="url(#c4)"><rect x="300" y="98" width="120" height="90" fill="url(#cap4)"/>
<ellipse cx="345" cy="128" rx="32" ry="15" fill="#fcecd4" filter="url(#b5)"/>
<ellipse cx="372" cy="172" rx="36" ry="10" fill="#dc9a50" filter="url(#b3)"/>
<ellipse cx="410" cy="140" rx="6" ry="20" fill="#e8b478" filter="url(#b3)"/>
<ellipse cx="312" cy="150" rx="5" ry="16" fill="#eab87c" filter="url(#b3)"/>
<rect x="300" y="98" width="120" height="90" fill="url(#lines)"/>
</g></g>
<path d="M404,183 C406.3,184.5 413.7,187.8 418,192 C422.3,196.2 426.0,202.7 430,208 C434.0,213.3 437.7,219.7 442,224 C446.3,228.3 451.0,232.3 456,234 C461.0,235.7 467.0,235.7 472,234 C477.0,232.3 482.3,228.0 486,224 C489.7,220.0 490.7,213.5 494,210 C497.3,206.5 502.0,203.7 506,203 C510.0,202.3 515.0,203.8 518,206 C521.0,208.2 523.0,214.3 524,216" fill="none" stroke="#8c5a26" stroke-width="13" stroke-linecap="round" stroke-linejoin="round" filter="url(#b2)"/>
<path d="M404,183 C406.3,184.5 413.7,187.8 418,192 C422.3,196.2 426.0,202.7 430,208 C434.0,213.3 437.7,219.7 442,224 C446.3,228.3 451.0,232.3 456,234 C461.0,235.7 467.0,235.7 472,234 C477.0,232.3 483.7,225.7 486,224" fill="none" stroke="#6c4218" stroke-width="6" stroke-linecap="round" stroke-linejoin="round" filter="url(#b2)"/>
<g clip-path="url(#sil)">
<ellipse cx="589" cy="195" rx="16" ry="20" fill="#aa7236" filter="url(#b2)" transform="rotate(20 589 195)"/>
<ellipse cx="596" cy="190" rx="8" ry="14" fill="#8e5a26" filter="url(#b3)" transform="rotate(20 596 190)" opacity="0.8"/>
<ellipse cx="581" cy="203" rx="9" ry="13" fill="#f6e8d4" filter="url(#b3)" transform="rotate(20 581 203)"/>
</g>
<path d="M388,170 C389.7,171.3 394.3,174.7 398,178 C401.7,181.3 408.0,188.0 410,190" fill="none" stroke="#a86c2c" stroke-width="8" stroke-linecap="round" stroke-linejoin="round" filter="url(#b2)"/>
<path d="M396,192 C398.0,193.3 404.0,196.0 408,200 C412.0,204.0 416.0,211.0 420,216 C424.0,221.0 430.0,227.7 432,230" fill="none" stroke="#94602a" stroke-width="8" stroke-linecap="round" stroke-linejoin="round" filter="url(#b2)" opacity="0.9"/>
<clipPath id="pf"><path d="M170,152 C168.7,146.0 172.3,140.0 176,136 C179.7,132.0 187.3,130.0 192,128 C196.7,126.0 196.0,124.7 204,124 C212.0,123.3 232.3,118.0 240,124 C247.7,130.0 248.0,146.5 250,160 C252.0,173.5 253.7,195.8 252,205 C250.3,214.2 242.3,211.5 240,215 C237.7,218.5 240.3,222.2 238,226 C235.7,229.8 231.0,235.7 226,238 C221.0,240.3 212.3,241.7 208,240 C203.7,238.3 200.0,233.3 200,228 C200.0,222.7 204.7,214.3 208,208 C211.3,201.7 217.3,196.0 220,190 C222.7,184.0 226.3,174.3 224,172 C221.7,169.7 212.7,176.0 206,176 C199.3,176.0 190.0,176.0 184,172 C178.0,168.0 171.3,158.0 170,152 Z"/></clipPath>
<g clip-path="url(#sil)"><g clip-path="url(#pf)"><rect x="165" y="110" width="100" height="140" filter="url(#grain)" opacity="0.55"/></g></g>
</svg>
</div>
<div id="status"><svg width="227" height="12" viewBox="0 0 227 12"><g font-family="IPAGothic, Liberation Mono, monospace" font-size="12" fill="#fff"><text x="4.500" y="10" textLength="30.600" lengthAdjust="spacingAndGlyphs">Frame</text><text x="44.500" y="10" textLength="14.100" lengthAdjust="spacingAndGlyphs">23:</text><text x="66.300" y="10" textLength="59" lengthAdjust="spacingAndGlyphs">2023-01-18</text><text x="135.100" y="10" textLength="38.900" lengthAdjust="spacingAndGlyphs">18:31:41</text><text x="179.900" y="10" textLength="43.200" lengthAdjust="spacingAndGlyphs">(42.89s)</text></g></svg></div>
</div>
<svg id="icons" width="904" height="120" viewBox="0 0 904 120">
<!--ICONS-START-->
<!-- dropdowns -->
<rect x="138" y="82.500" width="82.200" height="19.200" rx="3.500" fill="#6b6b6b"/>
<rect x="343" y="82.500" width="83.200" height="19.200" rx="3.500" fill="#6b6b6b"/>
<text x="144.600" y="95.900" font-family="Liberation Sans, sans-serif" font-size="12" fill="#dedede" textLength="34.400" lengthAdjust="spacingAndGlyphs">Beauty</text>
<text x="359.900" y="95.900" font-family="Liberation Sans, sans-serif" font-size="12" fill="#dedede" textLength="33.900" lengthAdjust="spacingAndGlyphs">Render</text>
<text transform="translate(348.400,0) scale(0.800,1.350)" x="0" y="72.100" font-family="Liberation Sans, sans-serif" font-size="12" fill="#dedede">&lt;</text>
<text transform="translate(398.400,0) scale(0.800,1.350)" x="0" y="72.100" font-family="Liberation Sans, sans-serif" font-size="12" fill="#dedede">&gt;</text>

<g fill="#777">
<!-- movie -->
<g transform="translate(2,77) scale(1.1667)"><path d="M18 4l2 4h-3l-2-4h-2l2 4h-3l-2-4H8l2 4H7L5 4H4c-1.1 0-1.99.9-1.99 2L2 18c0 1.1.9 2 2 2h16c1.1 0 2-.9 2-2V4h-4z"/></g>
<!-- play -->
<g transform="translate(36,77) scale(1.1667)"><path d="M12 2C6.48 2 2 6.48 2 12s4.48 10 10 10 10-4.48 10-10S17.52 2 12 2zm-2 14.5v-9l6 4.5-6 4.5z"/></g>
<!-- refresh -->
<g transform="translate(70,77) scale(1.1667)"><path d="M17.65 6.35C16.2 4.9 14.21 4 12 4c-4.42 0-7.99 3.58-7.99 8s3.57 8 7.99 8c3.73 0 6.84-2.55 7.73-6h-2.08c-.82 2.33-3.04 4-5.65 4-3.31 0-6-2.69-6-6s2.69-6 6-6c1.66 0 3.14.69 4.22 1.78L13 11h7V4l-2.35 2.35z"/></g>
<!-- RT -->
<text x="105" y="97.5" font-family="Liberation Sans, sans-serif" font-weight="bold" font-style="italic" font-size="18.5" textLength="25" lengthAdjust="spacingAndGlyphs">RT</text>
<!-- RGB -->
<circle cx="241" cy="92" r="11.8"/>
<text x="241.200" y="95.600" text-anchor="middle" font-family="Liberation Sans, sans-serif" font-weight="bold" font-size="10.2" fill="#2b2b2b" textLength="19.5" lengthAdjust="spacingAndGlyphs">RGB</text>
<!-- crop -->
<g transform="translate(309,77) scale(1.1667)"><path d="M17 15h2V7c0-1.1-.9-2-2-2H9v2h8v8zM7 17V1H5v4H1v2h4v10c0 1.1.9 2 2 2h10v4h2v-4h4v-2H7z"/></g>
<!-- lock -->
<g transform="translate(431,77) scale(1.1667)"><path d="M18 8h-1V6c0-2.76-2.24-5-5-5S7 3.240 7 6v2H6c-1.1 0-2 .9-2 2v10c0 1.1.9 2 2 2h12c1.1 0 2-.9 2-2V10c0-1.1-.9-2-2-2zm-6 9c-1.1 0-2-.9-2-2s.9-2 2-2 2 .9 2 2-.9 2-2 2zm3.100-9H8.900V6c0-1.71 1.390-3.100 3.100-3.100 1.710 0 3.100 1.390 3.100 3.100v2z"/></g>
<!-- grid -->
<g transform="translate(467,79)"><path d="M2 0h4v6h-6v-4a2 2 0 0 1 2-2zM9 0h6v6h-6zM18 0h4a2 2 0 0 1 2 2v4h-6zM0 9h6v6h-6zM9 9h6v6h-6zM18 9h6v6h-6zM0 18h6v6h-4a2 2 0 0 1-2-2zM9 18h6v6h-6zM18 18h6v4a2 2 0 0 1-2 2h-4z"/></g>
<!-- snowflakes -->
<g transform="translate(498.6,76.6) scale(1.2)"><path id="sf" d="M22 11h-4.170l3.240-3.240-1.410-1.420L15 11h-2V9l4.660-4.660-1.420-1.410L13 6.170V2h-2v4.170L7.760 2.930 6.340 4.340 11 9v2H9L4.340 6.340 2.930 7.760 6.170 11H2v2h4.170l-3.240 3.240 1.410 1.420L9 13h2v2l-4.660 4.660 1.420 1.410L11 17.830V22h2v-4.170l3.240 3.240 1.420-1.410L13 15v-2h2l4.660 4.660 1.410-1.420L17.830 13H22z"/></g>
<g transform="translate(532.6,76.6) scale(1.2)"><path d="M22 11h-4.170l3.240-3.240-1.410-1.420L15 11h-2V9l4.660-4.660-1.420-1.410L13 6.170V2h-2v4.170L7.760 2.930 6.340 4.340 11 9v2H9L4.340 6.340 2.930 7.760 6.170 11H2v2h4.170l-3.240 3.240 1.410 1.420L9 13h2v2l-4.660 4.660 1.420 1.410L11 17.830V22h2v-7l0-2h9z"/></g>
<text x="549.3" y="103" font-family="Liberation Sans, sans-serif" font-weight="bold" font-size="11">A</text>
<g transform="translate(566.6,76.6) scale(1.2)"><path d="M22 11h-4.170l3.240-3.240-1.410-1.420L15 11h-2V9l4.660-4.660-1.420-1.410L13 6.170V2h-2v4.170L7.760 2.930 6.340 4.340 11 9v2H9L4.340 6.340 2.930 7.760 6.170 11H2v2h4.170l-3.240 3.240 1.410 1.420L9 13h2v2l-4.660 4.660 1.420 1.410L11 17.830V22h2v-7l0-2h9z"/></g>
<text x="583.6" y="103" font-family="Liberation Sans, sans-serif" font-weight="bold" font-size="11">G</text>
<!-- circle -->
<g transform="translate(603,78) scale(1.1667)"><path d="M12 2C6.470 2 2 6.470 2 12s4.470 10 10 10 10-4.470 10-10S17.530 2 12 2zm0 18c-4.410 0-8-3.590-8-8s3.590-8 8-8 8 3.590 8 8-3.590 8-8 8z"/></g>
<!-- focus -->
<g transform="translate(651,77) scale(1.1667)"><path id="br" d="M5 15H3v4c0 1.100.9 2 2 2h4v-2H5v-4zM5 5h4V3H5c-1.100 0-2 .9-2 2v4h2V5zm14-2h-4v2h4v4h2V5c0-1.100-.9-2-2-2zm0 16h-4v2h4c1.100 0 2-.9 2-2v-4h-2v4z"/><circle cx="12" cy="12" r="3.2"/></g>
<!-- img focus -->
<g transform="translate(685,77) scale(1.1667)"><path d="M5 15H3v4c0 1.100.9 2 2 2h4v-2H5v-4zM5 5h4V3H5c-1.100 0-2 .9-2 2v4h2V5zm14-2h-4v2h4v4h2V5c0-1.100-.9-2-2-2zm0 16h-4v2h4c1.100 0 2-.9 2-2v-4h-2v4z"/><circle cx="15.300" cy="8.300" r="1.700"/><path d="M6.300 17l3.500-4.800 2.500 3 1.800-2.200 3.600 4z"/></g>
<!-- hatched -->
<g transform="translate(719,77) scale(1.1667)"><path d="M5 15H3v4c0 1.100.9 2 2 2h4v-2H5v-4zM5 5h4V3H5c-1.100 0-2 .9-2 2v4h2V5zm14-2h-4v2h4v4h2V5c0-1.100-.9-2-2-2zm0 16h-4v2h4c1.100 0 2-.9 2-2v-4h-2v4z"/><path d="M5.500 12.500l7-7h3l-10 10zM5.500 18.500l13-13v3l-10 10zM11.500 18.500l7-7v3l-4 4z"/></g>
<!-- photo_library -->
<g transform="translate(753,77) scale(1.1667)"><path d="M22 16V4c0-1.100-.9-2-2-2H8c-1.100 0-2 .9-2 2v12c0 1.100.9 2 2 2h12c1.100 0 2-.9 2-2zm-11-4l2.030 2.710L16 11l4 5H8l3-4zM2 6v14c0 1.100.9 2 2 2h14v-2H4V6H2z"/></g>
<!-- library_add -->
<g transform="translate(787,77) scale(1.1667)"><path d="M4 6H2v14c0 1.100.9 2 2 2h14v-2H4V6zm16-4H8c-1.100 0-2 .9-2 2v12c0 1.100.9 2 2 2h12c1.100 0 2-.9 2-2V4c0-1.100-.9-2-2-2zm-1 9h-4v4h-2v-4H9V9h4V5h2v4h4v2z"/></g>
<!-- PV -->
<g transform="translate(821,77) scale(1.1667)"><path d="M4 6H2v14c0 1.100.9 2 2 2h14v-2H4V6zm16-4H8c-1.100 0-2 .9-2 2v12c0 1.100.9 2 2 2h12c1.100 0 2-.9 2-2V4c0-1.100-.9-2-2-2z"/></g>
<text x="837.400" y="93.300" text-anchor="middle" font-family="Liberation Sans, sans-serif" font-weight="bold" font-size="10.500" fill="#2b2b2b" textLength="14.500" lengthAdjust="spacingAndGlyphs">PV</text>
<!-- file_copy -->
<g transform="translate(855,77) scale(1.1667)"><path d="M16 1H4c-1.100 0-2 .9-2 2v14h2V3h12V1zm-1 4l6 6v10c0 1.100-.9 2-2 2H7.990C6.890 23 6 22.100 6 21l.010-14c0-1.100.890-2 1.990-2h7zm-1 7h5.500L14 6.500V12z"/></g>
</g>
<!-- arrows -->
<g fill="#c4c4c4">
<path d="M259.700 89.300h9l-4.500 4.900z"/>
<path d="M636.200 89.300h9l-4.500 4.900z"/>
<path d="M207.700 89.600h8.600l-4.300 4.600z"/>
<path d="M413.700 89.600h8.600l-4.300 4.600z"/>
</g>
<!-- more -->
<path d="M894 85.500l4 5.500-4 5.500M899.500 85.500l4 5.500-4 5.500" fill="none" stroke="#393939" stroke-width="1.200"/>
<!-- hamburger -->
<path d="M7 37h14v2h-14zM7 41h14v2h-14zM7 45h14v2h-14z" fill="#fff"/>
<!-- window controls -->
<path d="M784.500 15.500h10" stroke="#000" stroke-width="1" fill="none"/>
<rect x="829.500" y="10.500" width="9" height="9" fill="none" stroke="#000" stroke-width="1"/>
<path d="M875.200 10.200l10 10M885.200 10.200l-10 10" stroke="#000" stroke-width="1.100" fill="none"/>

<g fill="#787878" transform="translate(275,77) scale(1.1667)">
<circle cx="6" cy="6" r="1.0"/>
<circle cx="6" cy="10" r="1.0"/>
<circle cx="6" cy="14" r="1.0"/>
<circle cx="6" cy="18" r="1.0"/>
<circle cx="10" cy="6" r="1.0"/>
<circle cx="10" cy="10" r="1.5"/>
<circle cx="10" cy="14" r="1.5"/>
<circle cx="10" cy="18" r="1.0"/>
<circle cx="14" cy="6" r="1.0"/>
<circle cx="14" cy="10" r="1.5"/>
<circle cx="14" cy="14" r="1.5"/>
<circle cx="14" cy="18" r="1.0"/>
<circle cx="18" cy="6" r="1.0"/>
<circle cx="18" cy="10" r="1.0"/>
<circle cx="18" cy="14" r="1.0"/>
<circle cx="18" cy="18" r="1.0"/>
<circle cx="10" cy="3" r="0.5"/>
<circle cx="3" cy="10" r="0.5"/>
<circle cx="10" cy="21" r="0.5"/>
<circle cx="21" cy="10" r="0.5"/>
<circle cx="14" cy="3" r="0.5"/>
<circle cx="3" cy="14" r="0.5"/>
<circle cx="14" cy="21" r="0.5"/>
<circle cx="21" cy="14" r="0.5"/>
</g>
<defs>
<radialGradient id="lg1" cx="0.4" cy="0.35" r="0.7"><stop offset="0" stop-color="#ffffff"/><stop offset="0.7" stop-color="#ececf1"/><stop offset="1" stop-color="#b4b4c0"/></radialGradient>
<radialGradient id="lg2" gradientUnits="userSpaceOnUse" cx="15.600" cy="15.600" r="6.500"><stop offset="0" stop-color="#86a4f8"/><stop offset="0.18" stop-color="#3a4cc0"/><stop offset="0.5" stop-color="#181e68"/><stop offset="0.8" stop-color="#0a0c34"/><stop offset="1" stop-color="#141a58"/></radialGradient>
<filter id="lb" x="-20%" y="-20%" width="140%" height="140%"><feGaussianBlur stdDeviation="0.450"/></filter>
</defs>
<g filter="url(#lb)">
<circle cx="17" cy="15.100" r="8" fill="url(#lg1)"/>
<path d="M19.500 21.500c3-1.200 5-4 5.200-7.500-.6 3-2.700 5.800-6.200 6.700z" fill="#9c9cab"/>
<path d="M21.700 8.700c1.400 2.400.9 6.300-1.200 8.800-2 2.500-6 3.500-8.500 1.500-2-2-1.500-5.500 1-7.500 2.500-2 6-1 8.700-2.800z" fill="url(#lg2)"/>
<ellipse cx="14.300" cy="18.700" rx="2.600" ry="1.100" fill="#5e6af0" opacity="0.850" transform="rotate(20 14.300 18.700)"/>
<path d="M19.500 9.800l1.800-1.400 1.300 1.700-1.300 1.300z" fill="#7c88dc"/>
</g>
<!--ICONS-END-->
</svg>
<div id="lborder"></div><div id="rborder"></div>
</div>
</body></html>
